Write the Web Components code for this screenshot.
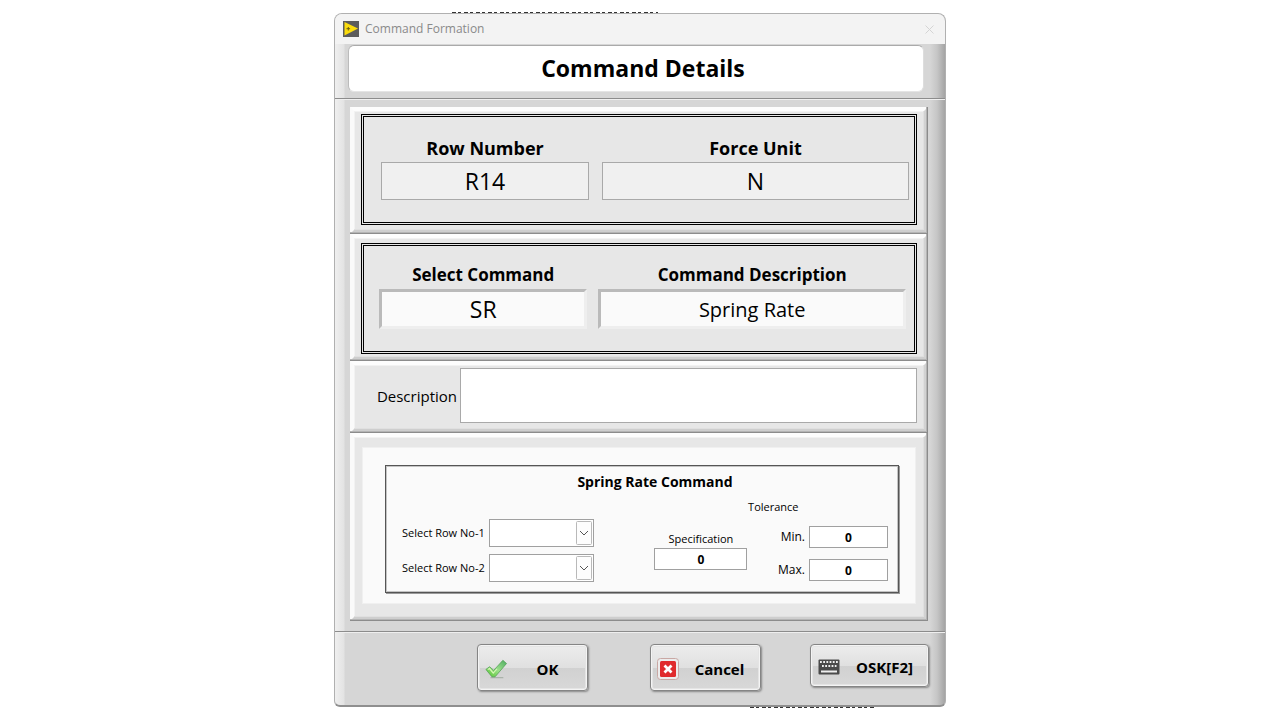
<!DOCTYPE html>
<html lang="en">
<head>
<meta charset="utf-8">
<title>Command Formation</title>
<style>
  * { box-sizing: border-box; }
  body {
    margin: 0;
    padding: 13px 16px;
    background: #fff;
    color: #000;
    font-family: "Open Sans", "Noto Sans", sans-serif;
  }
</style>
</head>
<body>
<command-dialog></command-dialog>

<script>
const define = (name, html, setup) => customElements.define(name, class extends HTMLElement {
  constructor() {
    super();
    this.attachShadow({ mode: "open" }).innerHTML = `<style>*{box-sizing:border-box}</style>` + html;
  }
  connectedCallback() { if (setup) setup.call(this, this.shadowRoot); }
});

/* Raised panel with a bright upper-left and a dark lower-right edge */
define("bevel-panel", `
<style>
  :host {
    display: block; box-sizing: border-box;
    padding: 4px 7px;
    background: #e7e7e7;
    border: 4px solid;
    border-color: #fdfdfd #d2d2d2 #cecece #fafafa;
    box-shadow: inset -1px -1px #e0e0e0, inset 1px 1px #f2f2f2;
    position: relative;
  }
  :host::after {
    content: ""; position: absolute; inset: -4px; pointer-events: none;
    border-right: 1px solid #8c8c8c; border-bottom: 1px solid #8c8c8c;
    box-shadow: inset -1px -1px #b4b4b4;
  }
</style>
<slot></slot>`);

/* Double-ruled box that lays its two fields side by side */
define("field-pair", `
<style>
  :host {
    display: grid; box-sizing: border-box;
    grid-template-columns: minmax(0, 208fr) minmax(0, 307fr);
    border: 3px double #000;
    min-height: 111px;
    align-content: start;
    padding: 19px 5px 0 17px; gap: 13px;
  }
  :host([sunken]) { padding: 16px 8px 0 15px; gap: 11px; }
</style>
<slot></slot>`);

/* Bold caption over a value; sunken fields have a bevel */
define("value-field", `
<style>
  :host { display: block; min-width: 0; }
  label { display: block; margin-bottom: 1px; text-align: center; font-weight: 700; font-size: 18px; line-height: 25px; white-space: nowrap; }
  .value {
    display: block; width: 100%; margin: 0; padding: 0; height: 38px;
    appearance: none; border-radius: 0; outline: 0;
    text-align: center; text-align-last: center;
    font-family: inherit; font-size: 23px; color: #000;
    background: #f0f0f0; border: 1px solid #a9a9a9;
  }
  :host([sunken]) label { font-size: 17px; margin-bottom: 2px; }
  :host([sunken]) .value {
    height: 40px; background: #fafafa;
    border: 3px solid; border-color: #bababa #eeeeee #eeeeee #bababa;
  }
  :host([compact]) .value { font-size: 20px; }
</style>
<label for="v"></label><div class="slotbox"></div>`, function (root) {
  root.querySelector("label").textContent = this.getAttribute("label");
  const value = this.getAttribute("value");
  let el;
  if (this.hasAttribute("options")) {
    el = document.createElement("select");
    el.append(new Option(value));
  } else {
    el = document.createElement("input");
    el.value = value;
    el.readOnly = true;
  }
  el.id = "v";
  el.className = "value";
  root.querySelector(".slotbox").replaceWith(el);
});

define("description-row", `
<style>
  :host { display: flex; align-items: center; gap: 3px; }
  label { flex: 0 0 96px; text-align: right; font-size: 15px; line-height: 20px; }
  textarea { flex: 1; min-width: 0; height: 55px; resize: none; display: block; margin: 0; padding: 4px; border: 1px solid #a9a9a9; background: #fff; font: inherit; font-size: 15px; outline: 0; border-radius: 0; }
</style>
<label for="d">Description</label><textarea id="d"></textarea>`);

define("row-select", `
<style>
  :host { display: flex; align-items: center; justify-content: flex-end; gap: 4px; }
  label { font-size: 11px; line-height: 16px; white-space: nowrap; }
  .box { display: grid; width: 105px; height: 28px; }
  select, svg { grid-area: 1 / 1; }
  select { appearance: none; width: 100%; height: 100%; margin: 0; padding: 0 20px 0 4px; background: #fff; border: 1px solid #a0a0a0; border-radius: 0; font: inherit; font-size: 11px; outline: 0; }
  svg { justify-self: end; align-self: center; margin-right: 2px; pointer-events: none; }
</style>
<label for="s"></label>
<span class="box"><select id="s"><option></option></select>
<svg width="16" height="24" viewBox="0 0 16 24"><rect x=".5" y=".5" width="15" height="23" rx="1" fill="#fdfdfd" stroke="#b9b9b9"/><path d="M4 10l4 4 4-4" fill="none" stroke="#555"/></svg></span>`, function (root) {
  root.querySelector("label").textContent = this.getAttribute("label");
});

define("number-field", `
<style>
  :host { display: flex; align-items: center; justify-content: flex-end; gap: 4px; }
  label { font-size: 12px; line-height: 18px; white-space: nowrap; }
  input { width: 79px; height: 22px; margin: 0; padding: 0; border: 1px solid #a0a0a0; border-radius: 0; background: #fff; text-align: center; font-family: inherit; font-weight: 700; font-size: 12px; color: #000; outline: 0; }
  :host([stacked]) { flex-direction: column; gap: 0; }
  :host([stacked]) label { font-size: 11px; }
  :host([stacked]) input { width: 93px; }
</style>
<label for="n"></label><input id="n" value="0" inputmode="decimal">`, function (root) {
  root.querySelector("label").textContent = this.getAttribute("label");
});

define("spring-rate-form", `
<style>
  :host { display: block; margin: 6px 1px 9px; padding: 18px 17px 11px 23px; background: #fafafa; outline: 1px solid #f0f0f0; outline-offset: -1px; }
  section { border: 1px solid #555; outline: 1px solid #c4c4c4; outline-offset: -2px; box-shadow: 1px 1px #999; min-height: 128px; padding: 5px 10px 0 16px; }
  h2 { margin: 0 0 0 20px; font-size: 14px; line-height: 21px; text-align: center; }
  .cols { display: flex; justify-content: space-between; align-items: flex-start; }
  .rows, .tol { display: grid; }
  .rows { gap: 7px; padding-top: 27px; }
  .spec { padding-top: 38px; margin-left: 30px; }
  .tol { gap: 11px; }
  p { margin: 6px 0 0 -30px; font-size: 11px; line-height: 17px; width: 52px; }
</style>
<section>
  <h2>Spring Rate Command</h2>
  <div class="cols">
    <div class="rows"><row-select label="Select Row No-1"></row-select><row-select label="Select Row No-2"></row-select></div>
    <div class="spec"><number-field stacked label="Specification"></number-field></div>
    <div class="tol"><p>Tolerance</p><number-field label="Min."></number-field><number-field label="Max."></number-field></div>
  </div>
</section>`);

define("push-button", `
<style>
  :host { display: block; width: 111px; height: 47px; }
  button {
    display: flex; align-items: center; width: 100%; height: 100%; padding: 2px 0 0 6px; margin: 0;
    border: 1px solid #858585; border-radius: 4px; color: #000;
    background: linear-gradient(#ededed, #e0e0e0 50%, #d1d1d1 51%, #d8d8d8);
    box-shadow: inset 0 0 0 1px #f4f4f4, inset 0 0 0 2px #e4e4e4, 1px 1px 2px #888;
    font-family: inherit; font-size: 15px; font-weight: 700; line-height: 20px;
  }
  .text { flex: 1; text-align: center; white-space: nowrap; }
  :host([wide]) { width: 119px; height: 43px; }
</style>
<button type="button"><slot name="icon"></slot><span class="text"><slot></slot></span></button>`);

define("command-dialog", `
<style>
  :host {
    display: block; position: relative; max-width: 612px; margin: 0 auto;
  }
  .window {
    position: relative; border: 1px solid #b0b0b0; border-bottom: 2px solid #8f8f8f; border-radius: 8px 8px 6px 6px; overflow: hidden;
    background: linear-gradient(90deg, #efefef, #e3e3e3 9px, #d6d6d6 10px, #d6d6d6 calc(100% - 15px), #c6c6c6 calc(100% - 8px), #a4a4a4);
  }
  /* Slivers of the window behind, peeping out over the edges */
  .peek { position: absolute; height: 3px; background: repeating-linear-gradient(90deg, #333 0 4px, #fff 4px 6px, #333 6px 9px, #fff 9px 12px); }
  .peek.top { left: 118px; width: 206px; top: -1px; }
  .peek.bottom { left: 416px; width: 124px; bottom: -1px; }
  .bar { display: flex; align-items: center; gap: 6px; height: 30px; padding: 0 9px 0 8px; background: #f3f3f3; color: #8a8a8a; font-size: 12px; line-height: 16px; }
  .bar span { flex: 1; }
  .bar button { width: 13px; height: 16px; margin: 0; padding: 0; border: 0; background: none; display: grid; place-items: center; }
  header { padding: 1px 21px 6px 13px; border-bottom: 1px solid #8c8c8c; }
  h1 { margin: 0; padding-left: 14px; background: #fff; border: 1px solid; border-color: #aaa #ddd #e4e4e4 #bbb; border-radius: 6px; text-align: center; font-size: 23px; line-height: 45px; }
  main { border-top: 1px solid #efefef; padding: 7px 17px 10px 15px; }
  .readout { padding: 3px 7px 5px; }
  .choice { padding: 5px 7px 3px; }
  .desc { padding: 3px 7px 6px; }
  footer { border-top: 1px solid #8c8c8c; box-shadow: inset 0 1px #efefef; padding: 12px 16px 14px; display: flex; justify-content: flex-end; }
  .ok { margin-right: 62px; }
  .cancel { margin-right: 49px; }
</style>
<div class="peek top"></div><div class="peek bottom"></div>
<div class="window">
  <div class="bar">
    <svg width="16" height="16" viewBox="0 0 16 16"><rect width="16" height="16" fill="#5c5c5c"/><path d="M1.500 1L15 7.500 1.500 14.500z" fill="#fbdc0c"/><path d="M3.500 7.700h3.600M5.300 6v3.500" stroke="#6b5d10"/></svg>
    <span>Command Formation</span>
    <button type="button" aria-label="Close"><svg width="9" height="9" viewBox="0 0 9 9"><path d="M.5 .5l8 8M8.500 .5l-8 8" stroke="#d4d4d4"/></svg></button>
  </div>
  <header><h1>Command Details</h1></header>
  <main>
    <bevel-panel class="readout"><field-pair>
      <value-field label="Row Number" value="R14"></value-field>
      <value-field label="Force Unit" value="N"></value-field>
    </field-pair></bevel-panel>
    <bevel-panel class="choice"><field-pair sunken>
      <value-field sunken options label="Select Command" value="SR"></value-field>
      <value-field sunken compact label="Command Description" value="Spring Rate"></value-field>
    </field-pair></bevel-panel>
    <bevel-panel class="desc"><description-row></description-row></bevel-panel>
    <bevel-panel><spring-rate-form></spring-rate-form></bevel-panel>
  </main>
  <footer>
    <push-button class="ok"><svg slot="icon" width="24" height="22" viewBox="0 0 26 24"><defs><linearGradient id="g" x1="1" y1="0" x2="0" y2="1"><stop offset="0" stop-color="#4dab62"/><stop offset=".5" stop-color="#9be08a"/><stop offset="1" stop-color="#55c52c"/></linearGradient></defs><path d="M7 21.500h14" stroke="#9aa59a"/><path d="M2 12.500L6 9.500l4.500 4L20.500 2.500 24.500 6 12 20.500H8.500z" fill="url(#g)" stroke="#4f9e52" stroke-width=".8"/><path d="M4 12.600l2-1.100 4 5 4-4.500" fill="none" stroke="#d9f8b8" stroke-width="1.200"/></svg>OK</push-button>
    <push-button class="cancel"><svg slot="icon" width="22" height="22" viewBox="0 0 22 22"><rect x=".5" y=".5" width="21" height="21" rx="3" fill="#ececec" stroke="#c9a8a4"/><rect x="3" y="3" width="16" height="16" rx="1.500" fill="#e02a2c"/><path d="M7.500 7.500l7 7M14.500 7.500l-7 7" stroke="#fff" stroke-width="2.800"/></svg>Cancel</push-button>
    <push-button wide><svg slot="icon" width="24" height="18" viewBox="0 0 24 18"><rect x="1.500" y="1.500" width="21" height="15" rx="1" fill="#4a4a4a"/><path d="M3 4h18M5 8h14.500" stroke="#eee" stroke-width="1.800" stroke-dasharray="1.800 1.400"/><path d="M4 13.500h16" stroke="#eee" stroke-width="2.200"/></svg>OSK[F2]</push-button>
  </footer>
</div>`);
</script>
</body>
</html>
